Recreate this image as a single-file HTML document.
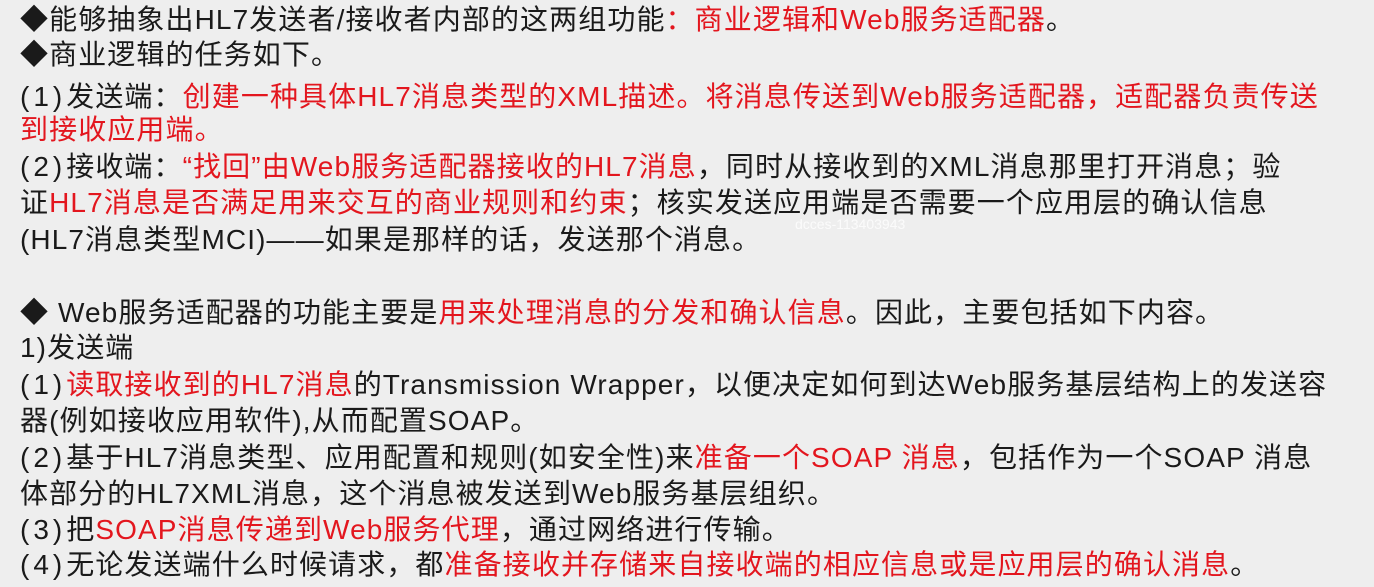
<!DOCTYPE html>
<html><head><meta charset="utf-8"><style>
html,body{margin:0;padding:0}
body{width:1374px;height:587px;background:#eeeeee;position:relative;overflow:hidden;font-family:"Liberation Sans","Noto Sans CJK SC",sans-serif;font-size:28px;letter-spacing:1.1px;color:#1a1a1a}
.l{position:absolute;left:20px;white-space:nowrap;line-height:34px;height:34px}
.r{color:#e3161e}
.p{letter-spacing:4px}
.wm{position:absolute;left:795px;top:216px;font-size:14px;color:#fff;opacity:.8;letter-spacing:0}
</style></head><body>
<div class="l" style="top:3px">◆能够抽象出HL7发送者/接收者内部的这两组功能<span class="r">：商业逻辑和Web服务适配器</span>。</div>
<div class="l" style="top:38px">◆商业逻辑的任务如下。</div>
<div class="l" style="top:80px"><span class="p">(1)</span>发送端：<span class="r">创建一种具体HL7消息类型的XML描述。将消息传送到Web服务适配器，适配器负责传送</span></div>
<div class="l r" style="top:113px">到接收应用端。</div>
<div class="l" style="top:150px"><span class="p">(2)</span>接收端：<span class="r">“找回”由Web服务适配器接收的HL7消息</span>，同时从接收到的XML消息那里打开消息；验</div>
<div class="l" style="top:186px">证<span class="r">HL7消息是否满足用来交互的商业规则和约束</span>；核实发送应用端是否需要一个应用层的确认信息</div>
<div class="l" style="top:223px">(HL7消息类型MCI)——如果是那样的话，发送那个消息。</div>
<div class="wm">dcces-113403943</div>
<div class="l" style="top:296px">◆ Web服务适配器的功能主要是<span class="r">用来处理消息的分发和确认信息</span>。因此，主要包括如下内容。</div>
<div class="l" style="top:331px">1)发送端</div>
<div class="l" style="top:368px"><span class="p">(1)</span><span class="r">读取接收到的HL7消息</span>的Transmission Wrapper，以便决定如何到达Web服务基层结构上的发送容</div>
<div class="l" style="top:404px">器(例如接收应用软件),从而配置SOAP。</div>
<div class="l" style="top:441px"><span class="p">(2)</span>基于HL7消息类型、应用配置和规则(如安全性)来<span class="r">准备一个SOAP 消息</span>，包括作为一个SOAP 消息</div>
<div class="l" style="top:477px">体部分的HL7XML消息，这个消息被发送到Web服务基层组织。</div>
<div class="l" style="top:513px"><span class="p">(3)</span>把<span class="r">SOAP消息传递到Web服务代理</span>，通过网络进行传输。</div>
<div class="l" style="top:548px"><span class="p">(4)</span>无论发送端什么时候请求，都<span class="r">准备接收并存储来自接收端的相应信息或是应用层的确认消息</span>。</div>
</body></html>
